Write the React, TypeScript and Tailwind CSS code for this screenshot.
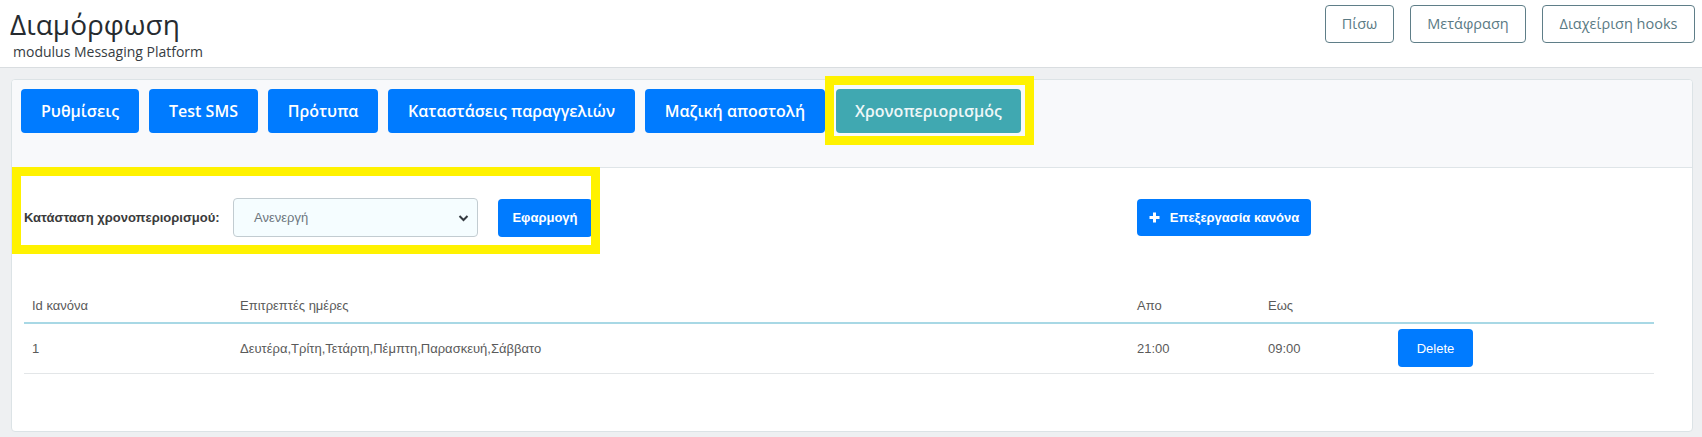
import React from "react";

const tabs: { label: string; w: string; active?: boolean }[] = [
  { label: "Ρυθμίσεις", w: "w-[118px]" },
  { label: "Test SMS", w: "w-[109px]" },
  { label: "Πρότυπα", w: "w-[110px]" },
  { label: "Καταστάσεις παραγγελιών", w: "w-[247px]" },
  { label: "Μαζική αποστολή", w: "w-[180px]" },
  { label: "Χρονοπεριορισμός", w: "w-[185px]", active: true },
];

const topButtons: { label: string; w: string }[] = [
  { label: "Πίσω", w: "w-[69px]" },
  { label: "Μετάφραση", w: "w-[116px]" },
  { label: "Διαχείριση hooks", w: "w-[153px]" },
];

export default function App() {
  return (
    <div className="relative min-h-[437px] bg-[#eef0f2] font-['Open_Sans',sans-serif] overflow-hidden">
      <header className="h-[68px] bg-white border-b border-[#d9dde0] flex justify-between">
        <div className="pl-[10px] pt-[7px]">
          <h1 className="text-[28px] leading-[34px] text-[#262b30]">Διαμόρφωση</h1>
          <div className="pl-[3px] mt-[1px] text-[14px] leading-[20px] text-[#363c42]">
            modulus Messaging Platform
          </div>
        </div>
        <div className="flex gap-4 pt-[5px] pr-[7px]">
          {topButtons.map((b) => (
            <button
              key={b.label}
              className={`${b.w} h-[38px] border border-[#5f7e88] rounded-[4px] text-[14.5px] font-medium text-[#5a7a84] bg-white flex items-center justify-center whitespace-nowrap`}
            >
              {b.label}
            </button>
          ))}
        </div>
      </header>

      <div className="ml-[11px] mr-[9px] mt-[11px] h-[353px] bg-white border border-[#dce3e6] rounded-[4px] overflow-hidden">
        <div className="h-[88px] bg-[#f8f9fb] border-b border-[#dfe5e8] px-[9px] pt-[9px] flex gap-[10px]">
          {tabs.map((t) => (
            <button
              key={t.label}
              className={`${t.w} h-[44px] rounded-[4px] text-[16px] font-semibold flex items-center justify-center ${
                t.active ? "bg-[#40a8b1] text-[#eef7f8] ml-[1px]" : "bg-[#007bff] text-white"
              }`}
            >
              {t.label}
            </button>
          ))}
        </div>

        <div className="pt-[30px] pl-[12px] flex items-center font-['Liberation_Sans',sans-serif]">
          <div className="w-[209px] text-[13px] font-bold text-[#3b3b3b]">Κατάσταση χρονοπεριορισμού:</div>
          <div className="w-[245px] h-[39px] bg-[#f5fdff] border border-[#c2ccd1] rounded-[4px] flex items-center justify-between pl-[20px] pr-[8px]">
            <span className="text-[13px] text-[#6c757d]">Ανενεργή</span>
            <svg width="11" height="8" viewBox="0 0 11 8">
              <path d="M1.5 2 L5.5 6 L9.5 2" fill="none" stroke="#343a40" strokeWidth="2" />
            </svg>
          </div>
          <button className="ml-[20px] w-[94px] h-[38px] bg-[#007bff] rounded-[4px] text-white text-[13px] font-bold">
            Εφαρμογή
          </button>
          <button className="ml-[545px] w-[174px] h-[37px] bg-[#007bff] rounded-[4px] text-white text-[13px] font-bold flex items-center justify-center gap-[10px]">
            <svg width="11" height="11" viewBox="0 0 11 11">
              <path d="M5.5 0.5 V10.5 M0.5 5.5 H10.5" stroke="white" strokeWidth="3" />
            </svg>
            Επεξεργασία κανόνα
          </button>
        </div>

        <table className="ml-[12px] mt-[53px] w-[1630px] border-collapse font-['Liberation_Sans',sans-serif] text-[13px] text-[#5a5a5a]">
          <thead>
            <tr className="h-[33px] border-b-2 border-[#a8d8e5]">
              <th className="w-[208px] text-left font-normal pl-[8px] align-middle">Id κανόνα</th>
              <th className="w-[897px] text-left font-normal pl-[8px]">Επιτρεπτές ημέρες</th>
              <th className="w-[131px] text-left font-normal pl-[8px]">Απο</th>
              <th className="w-[130px] text-left font-normal pl-[8px]">Εως</th>
              <th></th>
            </tr>
          </thead>
          <tbody>
            <tr className="h-[50px] border-b border-[#e3e6e8]">
              <td className="pl-[8px]">1</td>
              <td className="pl-[8px]">Δευτέρα,Τρίτη,Τετάρτη,Πέμπτη,Παρασκευή,Σάββατο</td>
              <td className="pl-[8px]">21:00</td>
              <td className="pl-[8px]">09:00</td>
              <td className="pl-[8px]">
                <button className="w-[75px] h-[38px] bg-[#007bff] rounded-[4px] text-white text-[13px]">Delete</button>
              </td>
            </tr>
          </tbody>
        </table>
      </div>

      <div className="absolute left-[825px] top-[76px] w-[209px] h-[69px] border-[9px] border-[#fff200] pointer-events-none"></div>
      <div className="absolute left-[12px] top-[167px] w-[588px] h-[87px] border-[9px] border-[#fff200] pointer-events-none"></div>
    </div>
  );
}
